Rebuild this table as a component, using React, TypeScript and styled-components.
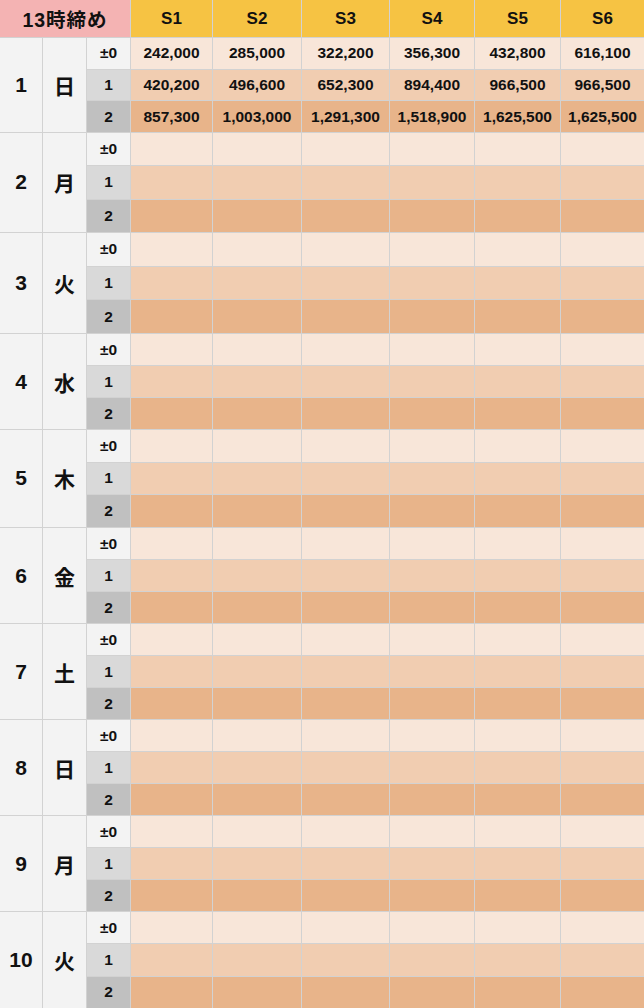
import React from "react";
import styled, { createGlobalStyle } from "styled-components";

const GlobalStyle = createGlobalStyle`
  html, body {
    margin: 0;
    padding: 0;
    background: #fff;
  }
  body {
    font-family: "Liberation Sans", "Noto Sans CJK JP", Arial, sans-serif;
    color: #111;
  }
`;

const COLS = "42px 43px 43px 81px 88px 87px 84px 85px 83px";

const slots = ["S1", "S2", "S3", "S4", "S5", "S6"];
const diffs = ["±0", "1", "2"];

interface DayType {
  num: number;
  name: string;
  height: number;
  values?: string[][];
}

const days: DayType[] = [
  {
    num: 1,
    name: "日",
    height: 94,
    values: [
      ["242,000", "285,000", "322,200", "356,300", "432,800", "616,100"],
      ["420,200", "496,600", "652,300", "894,400", "966,500", "966,500"],
      ["857,300", "1,003,000", "1,291,300", "1,518,900", "1,625,500", "1,625,500"],
    ],
  },
  { num: 2, name: "月", height: 99 },
  { num: 3, name: "火", height: 100 },
  { num: 4, name: "水", height: 95 },
  { num: 5, name: "木", height: 97 },
  { num: 6, name: "金", height: 95 },
  { num: 7, name: "土", height: 95 },
  { num: 8, name: "日", height: 95 },
  { num: 9, name: "月", height: 95 },
  { num: 10, name: "火", height: 96 },
];

const diffBg = ["#f3f3f3", "#d9d9d9", "#c0c0c0"];
const cellBg = ["#f8e6d9", "#f1cdb1", "#e8b48a"];

const App = () => {
  return (
    <>
      <GlobalStyle />
      <Table>
        <Header>
          <Title>13時締め</Title>
          {slots.map((s) => (
            <SlotHead key={s}>{s}</SlotHead>
          ))}
        </Header>
        {days.map((day) => (
          <Block key={day.num} $height={day.height}>
            <DayCell>{day.num}</DayCell>
            <DayCell $jp>{day.name}</DayCell>
            {diffs.map((d, r) => (
              <React.Fragment key={d}>
                <DiffCell $row={r + 1} $bg={diffBg[r]}>
                  {d}
                </DiffCell>
                {slots.map((s, c) => (
                  <ValueCell key={s} $row={r + 1} $bg={cellBg[r]}>
                    {day.values ? day.values[r][c] : ""}
                  </ValueCell>
                ))}
              </React.Fragment>
            ))}
          </Block>
        ))}
      </Table>
    </>
  );
};

const Table = styled.div`
  width: 644px;
  height: 1008px;
  display: flex;
  flex-direction: column;
  gap: 1px;
  background: #d2d2d2;
  overflow: hidden;
`;

const Header = styled.div`
  display: grid;
  grid-template-columns: ${COLS};
  column-gap: 1px;
  height: 37px;
  flex-shrink: 0;
`;

const Title = styled.div`
  grid-column: 1 / span 3;
  background: #f4b3b3;
  display: flex;
  align-items: center;
  justify-content: center;
  font-family: "Liberation Sans", "Noto Sans CJK JP", sans-serif;
  font-weight: 700;
  font-size: 19.5px;
  letter-spacing: 1px;
  color: #111;
`;

const SlotHead = styled.div`
  background: #f6c343;
  display: flex;
  align-items: center;
  justify-content: center;
  font-weight: 700;
  font-size: 17px;
  color: #111;
`;

const Block = styled.div<{ $height: number }>`
  display: grid;
  grid-template-columns: ${COLS};
  grid-template-rows: repeat(3, 1fr);
  gap: 1px;
  height: ${(p) => p.$height}px;
  flex-shrink: 0;
`;

const DayCell = styled.div<{ $jp?: boolean }>`
  grid-row: 1 / span 3;
  background: #f3f3f3;
  display: flex;
  align-items: center;
  justify-content: center;
  font-family: ${(p) =>
    p.$jp ? `"Noto Sans CJK JP", sans-serif` : `"Liberation Sans", Arial, sans-serif`};
  font-weight: 700;
  font-size: 21px;
  color: #111;
`;

const DiffCell = styled.div<{ $row: number; $bg: string }>`
  grid-row: ${(p) => p.$row};
  background: ${(p) => p.$bg};
  display: flex;
  align-items: center;
  justify-content: center;
  font-weight: 700;
  font-size: 15.5px;
  color: #111;
`;

const ValueCell = styled.div<{ $row: number; $bg: string }>`
  grid-row: ${(p) => p.$row};
  background: ${(p) => p.$bg};
  display: flex;
  align-items: center;
  justify-content: center;
  font-weight: 700;
  font-size: 15.5px;
  color: #111;
  white-space: nowrap;
`;

export default App;
